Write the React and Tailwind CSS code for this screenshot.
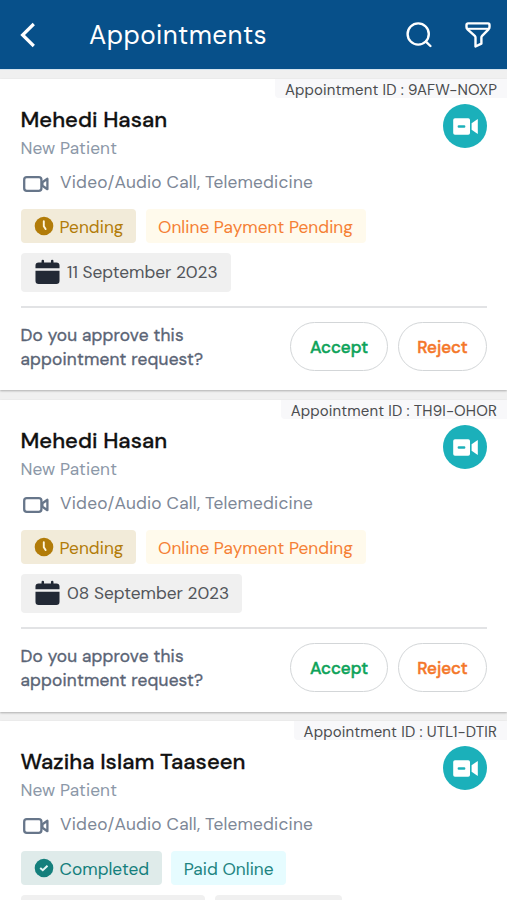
import React from 'react';
import clsx from 'clsx';

const APPOINTMENTS = [
    {
        id: '9AFW-NOXP',
        name: 'Mehedi Hasan',
        status: 'pending',
        payment: 'Online Payment Pending',
        date: '11 September 2023',
    },
    {
        id: 'TH9I-OHOR',
        name: 'Mehedi Hasan',
        status: 'pending',
        payment: 'Online Payment Pending',
        date: '08 September 2023',
    },
    {
        id: 'UTL1-DTIR',
        name: 'Waziha Islam Taaseen',
        status: 'completed',
        payment: 'Paid Online',
    },
];

const Icons = {
    Back: (props) => (
        <svg viewBox="0 0 16 26" fill="none" stroke="currentColor" strokeWidth="3.2" {...props}>
            <path d="M13.800 2 2.600 13l11.200 11" />
        </svg>
    ),
    Search: (props) => (
        <svg viewBox="0 0 26 26" fill="none" stroke="currentColor" strokeWidth="2.4" strokeLinecap="round" {...props}>
            <circle cx="12.200" cy="12" r="10.6" />
            <path d="m19.900 19.600 4.500 4.400" />
        </svg>
    ),
    Filter: (props) => (
        <svg viewBox="0 0 26 26" fill="none" stroke="currentColor" strokeWidth="2.4" strokeLinejoin="round" {...props}>
            <path d="M3 1.400h20a1.500 1.500 0 0 1 1.500 1.500v2c0 1-.3 1.600-1 2.400l-6.400 6.500c-.5.5-.7.9-.7 1.600v6.200l-5.900 2.900v-9.100c0-.7-.2-1.100-.7-1.600L2.500 7.300c-.7-.8-1-1.400-1-2.400v-2A1.500 1.500 0 0 1 3 1.400Z" />
            <path d="M2.200 6.800h21.600" strokeWidth="2" />
        </svg>
    ),
    Camera: (props) => (
        <svg viewBox="0 0 26 16" fill="none" stroke="currentColor" strokeWidth="2.3" strokeLinejoin="round" {...props}>
            <rect x="1.200" y="1.200" width="17.200" height="13.600" rx="2.600" />
            <path d="m19.400 6.200 5-3.400v10.400l-5-3.400Z" />
        </svg>
    ),
    CameraSolid: (props) => (
        <svg viewBox="0 0 25 17" fill="currentColor" {...props}>
            <path fillRule="evenodd" d="M2 .3h13.200a1.800 1.800 0 0 1 1.800 1.800v12.800a1.800 1.800 0 0 1-1.800 1.800H2A1.800 1.800 0 0 1 .2 14.900V2.100A1.800 1.800 0 0 1 2 .3Zm3.800 7a1.200 1.200 0 0 0 0 2.400h5.400a1.200 1.200 0 0 0 0-2.400Z" />
            <path d="M18.600 5.200 24.800.9v15.200l-6.200-4.300Z" />
        </svg>
    ),
    Clock: (props) => (
        <svg viewBox="0 0 20 20" {...props}>
            <circle cx="10" cy="10" r="9.300" fill="currentColor" />
            <path d="M9.800 5.200v5l1.800 2.900" fill="none" stroke="#fff6dd" strokeWidth="1.900" strokeLinecap="round" />
        </svg>
    ),
    Check: (props) => (
        <svg viewBox="0 0 20 20" {...props}>
            <circle cx="10" cy="10" r="9.300" fill="currentColor" />
            <path d="m6.200 9.900 2.600 2.300 4.700-4.400" fill="none" stroke="#e6f6f5" strokeWidth="2" />
        </svg>
    ),
    Calendar: (props) => (
        <svg viewBox="0 0 26 26" fill="currentColor" {...props}>
            <path d="M.5 9V6.300a3.300 3.300 0 0 1 3.300-3.300h3V1.600a1.300 1.300 0 0 1 2.600 0V3h7.200V1.600a1.300 1.300 0 0 1 2.600 0V3h3a3.300 3.300 0 0 1 3.300 3.300V9Z" />
            <path d="M.5 11.600h25v10.600a3.300 3.300 0 0 1-3.300 3.300H3.800a3.300 3.300 0 0 1-3.300-3.300Z" />
        </svg>
    ),
};

const STATUS = {
    pending: {
        label: 'Pending',
        icon: Icons.Clock,
        badge: 'bg-[#f2ebd9] text-[#b27c09]',
        payment: 'bg-[#fffaec] text-[#f58035]',
    },
    completed: {
        label: 'Completed',
        icon: Icons.Check,
        badge: 'bg-[#dfebea] text-[#147f7c]',
        payment: 'bg-[#e6fcff] text-[#218481]',
    },
};

function Tag({ className, children }) {
    return (
        <div className={clsx('flex items-center rounded-[4px] whitespace-nowrap', className)}>{children}</div>
    );
}

function AppointmentCard({ appointment }) {
    const { id, name, payment, date } = appointment;
    const status = STATUS[appointment.status];
    const StatusIcon = status.icon;

    return (
        <article className="h-[311.4px] shrink-0 bg-white shadow-[0_1px_2px_rgba(0,0,0,0.28)]">
            <div className="flex justify-end">
                <div className="h-[19px] rounded-bl-[4px] bg-[#f8f8fa] px-[10px] text-[15px] leading-[23px] tracking-[0.13px] text-[#4b4d50]">Appointment ID : {id}</div>
            </div>

            <div className="pr-[20px] pl-[20.500px]">
                <div className="flex justify-between pt-[6px]">
                    <div>
                        <h2 className="text-[22px] leading-[31px] font-medium tracking-[0.04px] text-[#111] [-webkit-text-stroke:0.3px]">{name}</h2>
                        <p className="text-[17.3px] leading-[27px] tracking-[0.1px] text-[#8c98a8]">New Patient</p>
                    </div>
                    <button className="flex h-[44px] w-[44px] items-center justify-center rounded-full bg-[#1bb0ba] text-white">
                        <Icons.CameraSolid className="h-[17px] w-[25px]" />
                    </button>
                </div>

                <div className="mt-[6px] flex h-[28px] items-center text-[#7d8796]">
                    <Icons.Camera className="mt-[3px] ml-[2px] h-[16px] w-[26px] text-[#67768a]" />
                    <span className="ml-[11.500px] text-[17.3px] leading-[24px] tracking-[0.2px]">Video/Audio Call, Telemedicine</span>
                </div>

                <div className="mt-[13px] flex gap-[9.500px] text-[17.3px] leading-[24px] tracking-[0.03px]">
                    <Tag className={clsx('h-[34px] pr-[12.500px] pl-[12.500px]', status.badge)}>
                        <StatusIcon className="mr-[6px] ml-[0.500px] h-[20px] w-[20px]" />
                        <span className="pt-px">{status.label}</span>
                    </Tag>
                    <Tag className={clsx('h-[34px] px-[12.500px] pt-px', status.payment)}>{payment}</Tag>
                </div>

                {date ? (
                    <div className="mt-[10px] flex text-[17.3px]">
                        <Tag className="h-[39px] bg-[#f0f0f0] pr-[13px] pl-[14.500px] text-[#53565b]">
                            <Icons.Calendar className="mr-[7px] mb-px h-[26px] w-[25px] text-[#222935]" />
                            {date}
                        </Tag>
                    </div>
                ) : (
                    <div className="mt-[10px] flex gap-[10px]">
                        <Tag className="h-[39px] w-[184px] bg-[#f0f0f0]" />
                        <Tag className="h-[39px] w-[127px] bg-[#f0f0f0]" />
                    </div>
                )}

                {appointment.status === 'pending' && (
                    <div className="mt-[14px] flex items-center justify-between border-t-2 border-[#e2e3e5] pt-[14px]">
                        <p className="text-[17.3px] leading-[24px] tracking-[0.18px] text-[#5a6475] [-webkit-text-stroke:0.35px]">
                            Do you approve this
                            <br />
                            appointment request?
                        </p>
                        <div className="flex gap-[10px] text-[17px] leading-[26px] font-medium [-webkit-text-stroke:0.45px]">
                            <button className="h-[49px] w-[98px] rounded-full border border-[#d3d6d8] pt-px text-[#0ea35a]">Accept</button>
                            <button className="h-[49px] w-[89px] rounded-full border border-[#d3d6d8] pt-px text-[#f4772a]">Reject</button>
                        </div>
                    </div>
                )}
            </div>
        </article>
    );
}

function App() {
    return (
        <div className="flex h-[900px] w-full flex-col overflow-hidden bg-[#f0f0f0] font-['DM_Sans',Inter,sans-serif]">
            <header className="flex h-[69px] shrink-0 items-center bg-[#07508a] text-white">
                <button className="ml-[20px]"><Icons.Back className="h-[26px] w-[16px]" /></button>
                <h1 className="ml-[53px] flex-1 pt-[2px] text-[26px] tracking-[0.45px]">Appointments</h1>
                <button className="mr-[33px]"><Icons.Search className="h-[26px] w-[26px]" /></button>
                <button className="mr-[16.500px]"><Icons.Filter className="h-[26px] w-[26px]" /></button>
            </header>

            <main className="flex flex-col gap-[9.800px] border-t border-[#d4e4ee] pt-[9px]">
                {APPOINTMENTS.map((a) => <AppointmentCard key={a.id} appointment={a} />)}
            </main>
        </div>
    );
}

export default App;
